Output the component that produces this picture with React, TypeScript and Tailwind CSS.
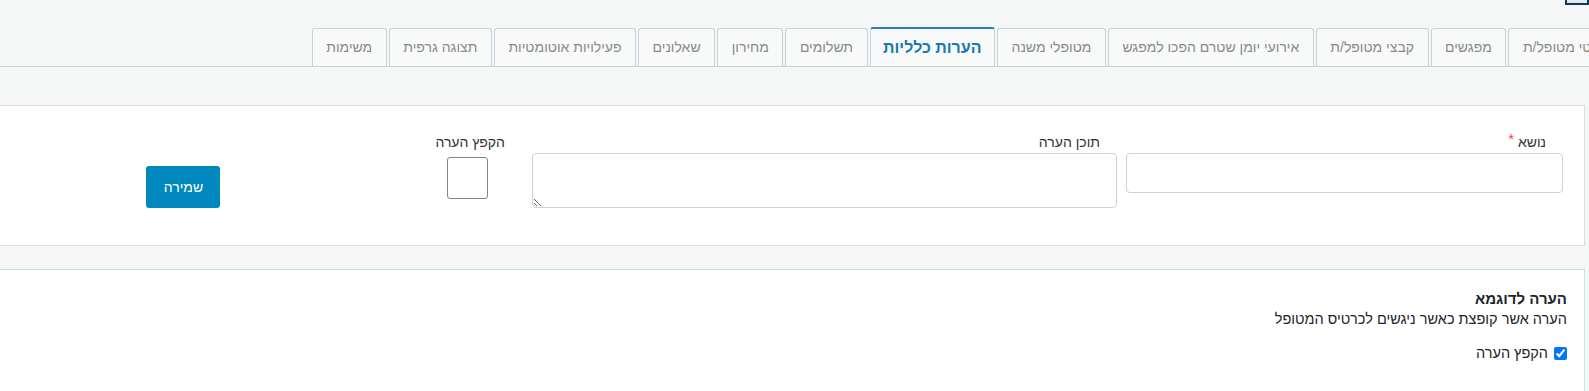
import React from 'react'

const tabs = [
  'פרטי מטופל/ת',
  'מפגשים',
  'קבצי מטופל/ת',
  'אירועי יומן שטרם הפכו למפגש',
  'מטופלי משנה',
  'הערות כלליות',
  'תשלומים',
  'מחירון',
  'שאלונים',
  'פעילויות אוטומטיות',
  'תצוגה גרפית',
  'משימות',
]

const activeTab = 'הערות כלליות'

function Tabs() {
  return (
    <div className="flex items-end gap-[2px] h-[39px] border-b border-[#c8d1dc] -mr-[33px]">
      {tabs.map((t) =>
        t === activeTab ? (
          <div
            key={t}
            className="h-[39px] px-[12.5px] flex items-center justify-center whitespace-nowrap bg-[#f8f9f9] border border-b-0 border-[#c8d1dc] border-t-2 border-t-[#2b7fb6] rounded-t-[3px] text-[16px] font-bold text-[#1c77b2]"
          >
            {t}
          </div>
        ) : (
          <div
            key={t}
            className="h-[38px] px-[13.5px] flex items-center justify-center whitespace-nowrap bg-[#f8f9f9] border border-b-0 border-[#c8d1dc] rounded-t-[3px] text-[14px] text-[#8a8a8a]"
          >
            {t}
          </div>
        )
      )}
    </div>
  )
}

function NoteForm() {
  return (
    <div className="bg-white border border-[#dcdcdc] -ml-[2px] mr-[4px] h-[141px] pt-[26px] pr-[21px] flex items-start text-[14px] text-[#333]">
      <div className="w-[437px] flex flex-col">
        <label className="h-[20px] leading-[20px] pr-[17px] mb-[1px]">
          נושא <span className="text-[#ff3b3b] relative -top-[3px]">*</span>
        </label>
        <input className="h-[40px] border border-[#d2d2d2] rounded-[4px] px-2 outline-none" />
      </div>
      <div className="w-[585px] mr-[9px] flex flex-col">
        <label className="h-[20px] leading-[20px] pr-[17px] mb-[1px]">תוכן הערה</label>
        <textarea className="h-[55px] border border-[#d2d2d2] rounded-[4px] px-2 outline-none" />
      </div>
      <div className="mr-[27px] flex flex-col items-start">
        <label className="h-[20px] leading-[20px]">הקפץ הערה</label>
        <div className="mt-[5px] mr-[17px] w-[41px] h-[42px] border border-[#858585] rounded-[3px]" />
      </div>
      <button className="mr-[215px] mt-[34px] w-[74px] h-[42px] bg-[#0088be] text-white rounded-[3px] text-[14px]">
        שמירה
      </button>
    </div>
  )
}

function NoteCard() {
  return (
    <div className="bg-white border border-[#bfe3ef] -ml-[2px] mr-[4px] mt-[23px] h-[140px] pt-[18px] pr-[17px] text-[14.5px] text-[#212529]">
      <div className="font-bold text-[15px] leading-[21px]">הערה לדוגמא</div>
      <div className="leading-[21px]">הערה אשר קופצת כאשר ניגשים לכרטיס המטופל</div>
      <label className="mt-[13px] flex items-center gap-[6px] h-[21px]">
        <input type="checkbox" defaultChecked className="w-[13px] h-[13px]" />
        <span>הקפץ הערה</span>
      </label>
    </div>
  )
}

export default function App() {
  return (
    <div
      dir="rtl"
      className="w-[1589px] h-[391px] overflow-hidden bg-[#f5f7f7] font-['Liberation_Sans',Arial,sans-serif]"
    >
      <div className="h-[28px] flex">
        <div className="w-[24px] h-[5px] bg-[#e6e9ec] border-2 border-t-0 border-[#0b3a5b]" />
      </div>
      <Tabs />
      <div className="mt-[38px]">
        <NoteForm />
        <NoteCard />
      </div>
    </div>
  )
}
